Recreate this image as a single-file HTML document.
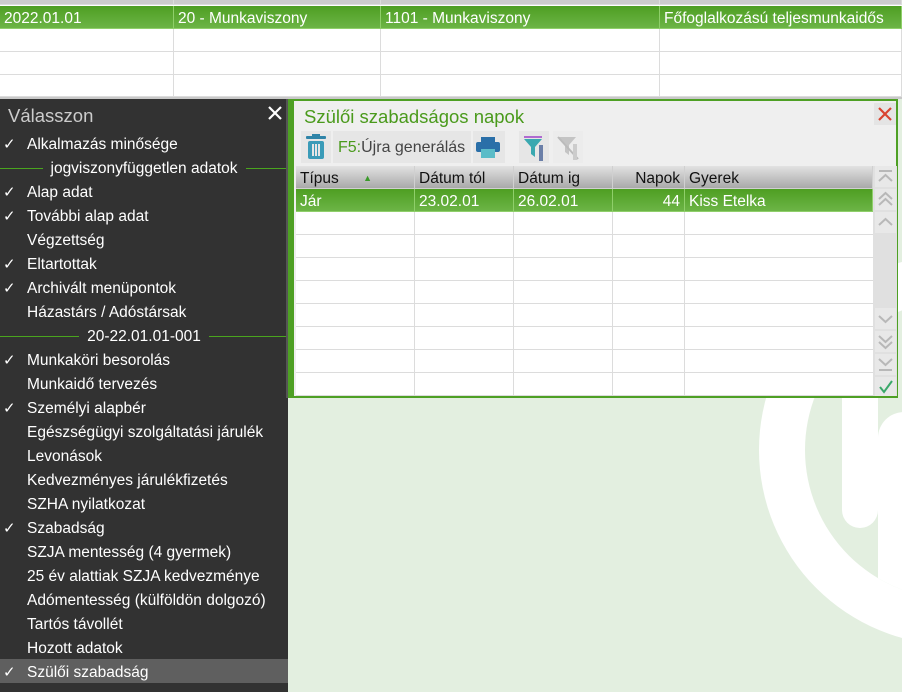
<!DOCTYPE html>
<html><head><meta charset="utf-8"><style>
*{margin:0;padding:0;box-sizing:border-box}
body{width:902px;height:692px;overflow:hidden;background:#e3efe0;font-family:"Liberation Sans",Arial,sans-serif;position:relative}
.a{position:absolute}
.tt{left:0;top:0;width:902px;height:99px;background:#fff;border-bottom:2px solid #c8c8c8}
.cell{position:absolute;height:23px;border-right:1px solid #dcdcdc;border-bottom:1px solid #dcdcdc;font-size:15.5px;line-height:25px;padding-left:4px;white-space:nowrap;overflow:hidden}
.g{background:linear-gradient(#4e9e22,#6cb446);color:#fff;border-color:#8fcf6a}
.lp{left:0;top:99px;width:288px;height:593px;background:#323232;color:#fff}
.it{position:absolute;left:0;width:288px;height:24px;font-size:15.5px;line-height:28px;padding-left:27px;white-space:nowrap}
.ck{position:absolute;left:3px;top:0;font-size:15px}
.sep{position:absolute;left:0;width:288px;height:24px;font-size:15.5px;line-height:28px;text-align:center}
.sep span{background:#323232;padding:0 8px;position:relative}
.sep:before{content:"";position:absolute;left:0;right:0;top:13px;border-top:1px solid #4aa51e}
.dlg{left:288px;top:99px;width:610px;height:299px;background:#efefef;border-left:6px solid #4ea024;border-top:2px solid #4ea024;border-right:2px solid #4ea024;border-bottom:2px solid #4ea024;box-shadow:-2px 0 0 #555}
.hd{background:linear-gradient(#e2e2e2,#a9a9a9);color:#111;border-color:#d0d0d0}
.sb{position:absolute;left:875px;width:21px;height:21px;background:#e8e8e8}
</style></head><body>
<svg class="a" style="left:0;top:0" width="902" height="692">
<defs><clipPath id="ci"><circle cx="954" cy="450" r="149"/></clipPath></defs>
<circle cx="954" cy="450" r="195" fill="#fff"/>
<circle cx="954" cy="450" r="149" fill="#e3efe0"/>
<g clip-path="url(#ci)"><rect x="842" y="300" width="36" height="228" rx="18" fill="#fff"/>
<rect x="878" y="412" width="60" height="300" rx="26" fill="#fff"/></g>
</svg>
<div class="a tt">
<div class="cell" style="left:0;top:-18px;width:174px;background:#ccc"></div>
<div class="cell" style="left:174px;top:-18px;width:207px;background:#ccc"></div>
<div class="cell" style="left:381px;top:-18px;width:279px;background:#ccc"></div>
<div class="cell" style="left:660px;top:-18px;width:242px;background:#ccc"></div>
<div class="cell g" style="left:0;top:6px;width:174px">2022.01.01</div>
<div class="cell g" style="left:174px;top:6px;width:207px">20 - Munkaviszony</div>
<div class="cell g" style="left:381px;top:6px;width:279px">1101 - Munkaviszony</div>
<div class="cell g" style="left:660px;top:6px;width:242px">Főfoglalkozású teljesmunkaidős</div>
<div class="cell" style="left:0;top:29px;width:174px"></div><div class="cell" style="left:174px;top:29px;width:207px"></div><div class="cell" style="left:381px;top:29px;width:279px"></div><div class="cell" style="left:660px;top:29px;width:242px"></div>
<div class="cell" style="left:0;top:52px;width:174px"></div><div class="cell" style="left:174px;top:52px;width:207px"></div><div class="cell" style="left:381px;top:52px;width:279px"></div><div class="cell" style="left:660px;top:52px;width:242px"></div>
<div class="cell" style="left:0;top:75px;width:174px;height:22px"></div><div class="cell" style="left:174px;top:75px;width:207px;height:22px"></div><div class="cell" style="left:381px;top:75px;width:279px;height:22px"></div><div class="cell" style="left:660px;top:75px;width:242px;height:22px"></div>
</div>
<div class="a lp">
<div class="a" style="left:8px;top:6px;font-size:18.5px;color:#ccc">Válasszon</div>
<svg class="a" style="left:268px;top:7px" width="14" height="14"><path d="M1 1L13 13M13 1L1 13" stroke="#fff" stroke-width="2.2"/></svg>
<div class="it" style="top:32px"><span class="ck">✓</span>Alkalmazás minősége</div>
<div class="sep" style="top:56px"><span>jogviszonyfüggetlen adatok</span></div>
<div class="it" style="top:80px"><span class="ck">✓</span>Alap adat</div>
<div class="it" style="top:104px"><span class="ck">✓</span>További alap adat</div>
<div class="it" style="top:128px">Végzettség</div>
<div class="it" style="top:152px"><span class="ck">✓</span>Eltartottak</div>
<div class="it" style="top:176px"><span class="ck">✓</span>Archivált menüpontok</div>
<div class="it" style="top:200px">Házastárs / Adóstársak</div>
<div class="sep" style="top:224px"><span>20-22.01.01-001</span></div>
<div class="it" style="top:248px"><span class="ck">✓</span>Munkaköri besorolás</div>
<div class="it" style="top:272px">Munkaidő tervezés</div>
<div class="it" style="top:296px"><span class="ck">✓</span>Személyi alapbér</div>
<div class="it" style="top:320px">Egészségügyi szolgáltatási járulék</div>
<div class="it" style="top:344px">Levonások</div>
<div class="it" style="top:368px">Kedvezményes járulékfizetés</div>
<div class="it" style="top:392px">SZHA nyilatkozat</div>
<div class="it" style="top:416px"><span class="ck">✓</span>Szabadság</div>
<div class="it" style="top:440px">SZJA mentesség (4 gyermek)</div>
<div class="it" style="top:464px">25 év alattiak SZJA kedvezménye</div>
<div class="it" style="top:488px">Adómentesség (külföldön dolgozó)</div>
<div class="it" style="top:512px">Tartós távollét</div>
<div class="it" style="top:536px">Hozott adatok</div>
<div class="it" style="top:560px;background:#5f5f5f"><span class="ck">✓</span>Szülői szabadság</div>
</div>
<div class="a dlg"></div>
<div class="a" style="left:304px;top:106px;font-size:18.5px;color:#4a9a1c">Szülői szabadságos napok</div>
<svg class="a" style="left:874px;top:103px" width="22" height="22"><rect width="22" height="22" fill="#e4e4e4"/><path d="M5 5L17 17M17 5L5 17" stroke="#d9432f" stroke-width="2.2"/></svg>
<svg class="a" style="left:301px;top:131px" width="290" height="34">
<rect x="0" y="0" width="30" height="32" fill="#e6e6e6"/>
<rect x="5" y="5" width="20" height="3" rx="1" fill="#2f84a8"/><rect x="11" y="3" width="8" height="3" fill="#2f84a8"/>
<rect x="7" y="10" width="16" height="18" rx="2" fill="#3a9bb8"/>
<rect x="11" y="13" width="2" height="12" fill="#e6e6e6"/><rect x="14" y="13" width="2" height="12" fill="#e6e6e6"/><rect x="17" y="13" width="2" height="12" fill="#e6e6e6"/>
<rect x="32" y="0" width="138" height="32" fill="#e6e6e6"/>
<rect x="172" y="0" width="32" height="32" fill="#e6e6e6"/>
<rect x="180" y="6" width="14" height="6" fill="#2a6fa8"/><rect x="175" y="11" width="24" height="10" rx="2" fill="#2a6fa8"/><rect x="180" y="18" width="14" height="9" fill="#5bbcc8"/>
<rect x="218" y="0" width="30" height="32" fill="#e6e6e6"/>
<rect x="223" y="5" width="18" height="2" fill="#b06ad0"/><path d="M223 8h18l-7 8v10l-4-3v-7z" fill="#3aa8b0"/><rect x="238" y="14" width="4" height="16" fill="#6b7fa8"/>
<rect x="252" y="0" width="30" height="32" fill="#ececec"/>
<path d="M257 6h18l-7 8v10l-4-3v-7z" fill="#c4c4c4"/><path d="M257 6l20 22" stroke="#bbb" stroke-width="2"/><rect x="272" y="13" width="4" height="16" fill="#ccc"/>
</svg>
<div class="a" style="left:338px;top:139px;font-size:16px;color:#444"><span style="color:#4a9a1c">F5:</span>Újra generálás</div>
<div class="cell hd" style="left:296px;top:166px;width:119px">Típus <span style="color:#3a9a2a;font-size:9px;margin-left:20px;vertical-align:top">▲</span></div>
<div class="cell hd" style="left:415px;top:166px;width:99px">Dátum tól</div>
<div class="cell hd" style="left:514px;top:166px;width:99px">Dátum ig</div>
<div class="cell hd" style="left:613px;top:166px;width:72px;text-align:right;padding-right:4px">Napok</div>
<div class="cell hd" style="left:685px;top:166px;width:188px">Gyerek</div>
<div class="cell g" style="left:296px;top:189px;width:119px">Jár</div>
<div class="cell g" style="left:415px;top:189px;width:99px">23.02.01</div>
<div class="cell g" style="left:514px;top:189px;width:99px">26.02.01</div>
<div class="cell g" style="left:613px;top:189px;width:72px;text-align:right;padding-right:4px">44</div>
<div class="cell g" style="left:685px;top:189px;width:188px">Kiss Etelka</div>
<div class="a" style="left:296px;top:212px;width:577px;height:184px;background:#fff;
background-image:linear-gradient(#dcdcdc 1px,transparent 1px),linear-gradient(90deg,transparent 118px,#dcdcdc 118px,#dcdcdc 119px,transparent 119px,transparent 217px,#dcdcdc 217px,#dcdcdc 218px,transparent 218px,transparent 316px,#dcdcdc 316px,#dcdcdc 317px,transparent 317px,transparent 388px,#dcdcdc 388px,#dcdcdc 389px,transparent 389px);background-size:100% 23px,100% 100%;background-position:0 22px,0 0"></div>
<div class="a" style="left:873px;top:166px;width:24px;height:230px;background:#e0e0e0"></div>
<svg class="a" style="left:875px;top:166px" width="21" height="230" fill="none" stroke="#b8b8b8" stroke-width="2">
<rect x="0" y="0" width="21" height="21" fill="#e8e8e8" stroke="none"/><path d="M4 5h13M4 15l6.5-6 6.5 6"/>
<rect x="0" y="23" width="21" height="21" fill="#e8e8e8" stroke="none"/><path d="M4 33l6.5-6 6.5 6M4 39l6.5-6 6.5 6"/>
<rect x="0" y="46" width="21" height="21" fill="#e8e8e8" stroke="none"/><path d="M4 59l6.5-6 6.5 6"/>
<rect x="0" y="142" width="21" height="21" fill="#e8e8e8" stroke="none"/><path d="M4 150l6.5 6 6.5-6"/>
<rect x="0" y="165" width="21" height="21" fill="#e8e8e8" stroke="none"/><path d="M4 170l6.5 6 6.5-6M4 176l6.5 6 6.5-6"/>
<rect x="0" y="188" width="21" height="21" fill="#e8e8e8" stroke="none"/><path d="M4 193l6.5 6 6.5-6M4 204h13"/>
<rect x="0" y="211" width="21" height="19" fill="#e8e8e8" stroke="none"/><path d="M5 221l4 5 8-11" stroke="#3aa86a"/>
</svg>
</body></html>
